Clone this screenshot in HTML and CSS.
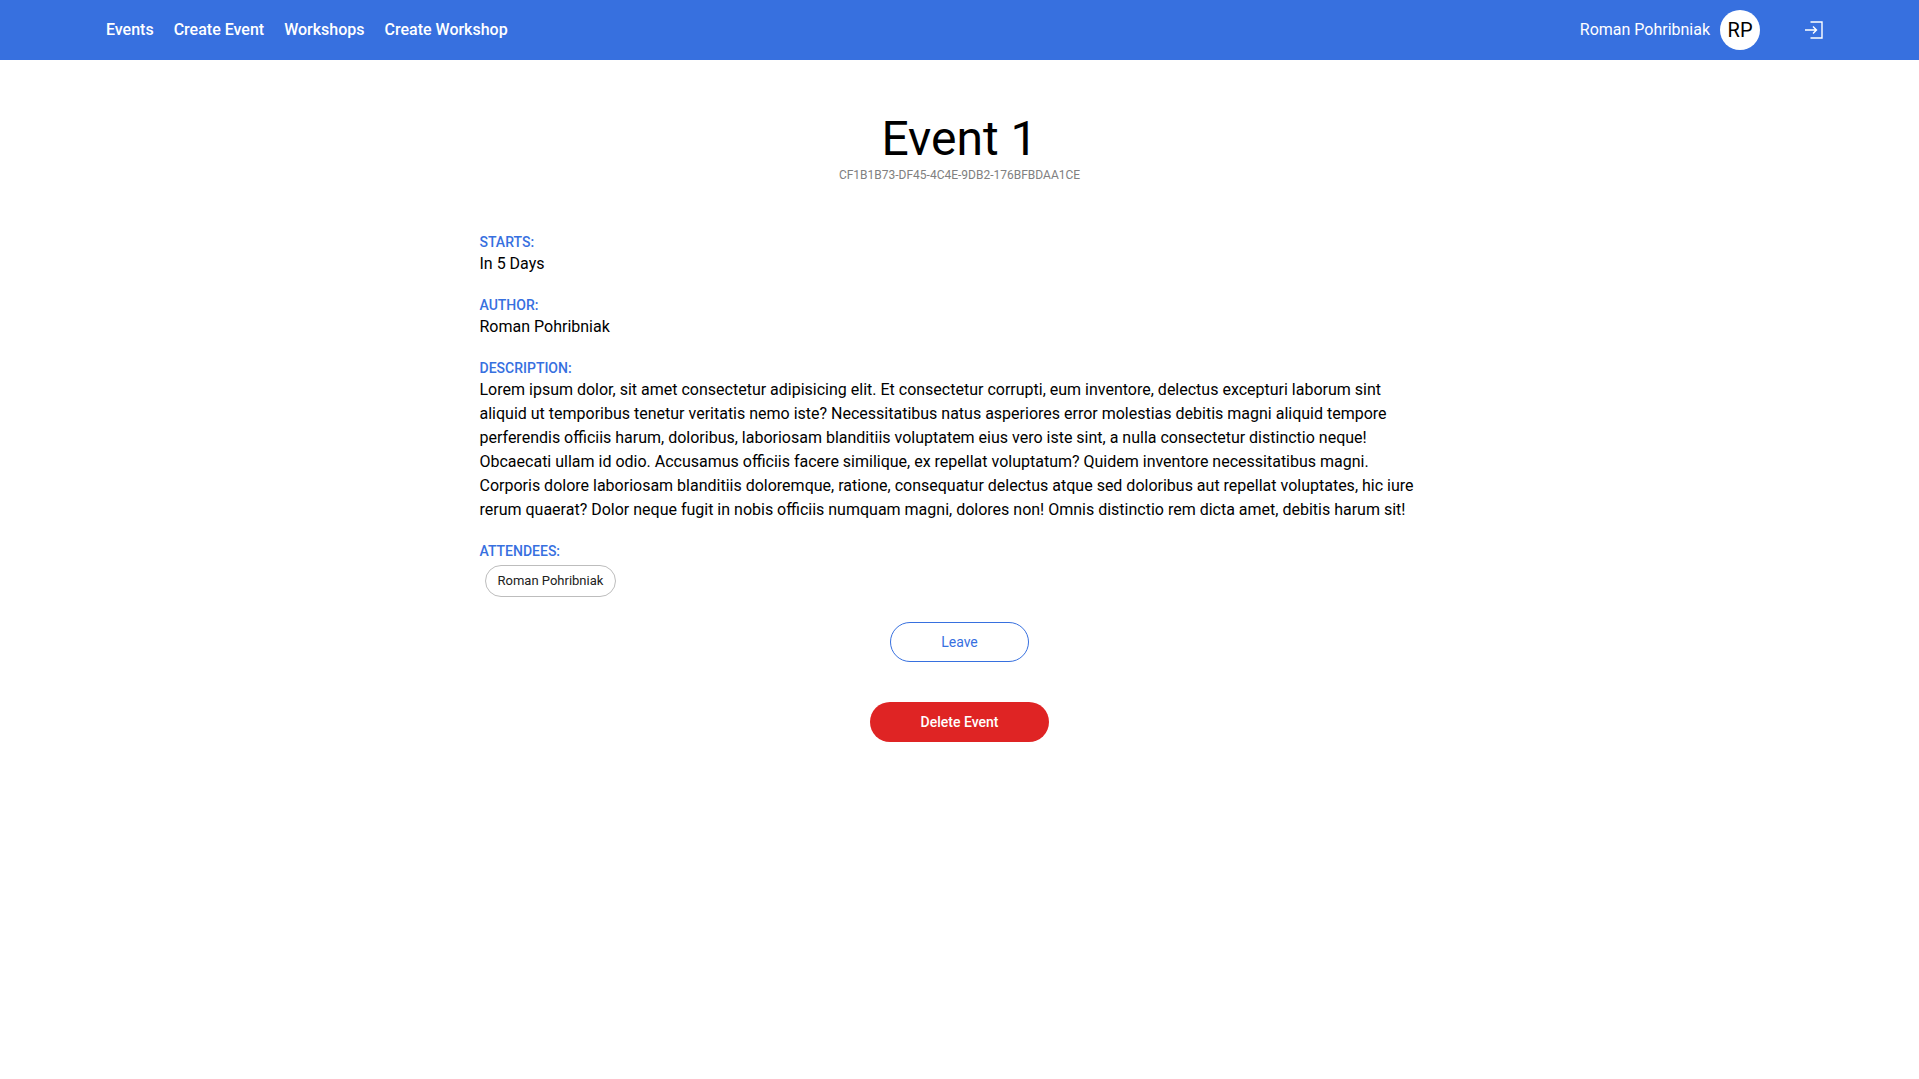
FILE: index.html
```html
<!DOCTYPE html>
<html lang="en">
<head>
  <meta charset="utf-8">
  <meta name="viewport" content="width=device-width, initial-scale=1">
  <title>Event 1</title>
  <link rel="stylesheet" href="styles.css">
</head>
<body>
  <header class="header">
    <nav class="nav">
      <a class="nav-link" href="#">Events</a>
      <a class="nav-link" href="#">Create Event</a>
      <a class="nav-link" href="#">Workshops</a>
      <a class="nav-link" href="#">Create Workshop</a>
    </nav>
    <div class="account">
      <a class="user" href="#">
        <span class="user-name">Roman Pohribniak</span>
        <span class="avatar">RP</span>
      </a>
      <button class="logout" type="button" aria-label="Log out">
        <svg width="18" height="18" viewBox="0 0 18 18" fill="none" stroke="currentColor" aria-hidden="true">
          <path d="M5.5 1H17v16H5.5" stroke-width="1.4"/>
          <path d="M0 9h11.5M8 5.5 11.5 9 8 12.5" stroke-width="1.4"/>
        </svg>
      </button>
    </div>
  </header>
  <main class="event">
    <div class="heading">
      <h1 class="title">Event 1</h1>
      <p class="event-id">CF1B1B73-DF45-4C4E-9DB2-176BFBDAA1CE</p>
    </div>
    <section class="field">
      <h2 class="label">Starts:</h2>
      <p class="value">In 5 Days</p>
    </section>
    <section class="field">
      <h2 class="label">Author:</h2>
      <p class="value">Roman Pohribniak</p>
    </section>
    <section class="field">
      <h2 class="label">Description:</h2>
      <p class="value">
        Lorem ipsum dolor, sit amet consectetur adipisicing elit. Et consectetur corrupti, eum inventore, delectus excepturi laborum sint <br>
        aliquid ut temporibus tenetur veritatis nemo iste? Necessitatibus natus asperiores error molestias debitis magni aliquid tempore <br>
        perferendis officiis harum, doloribus, laboriosam blanditiis voluptatem eius vero iste sint, a nulla consectetur distinctio neque! <br>
        Obcaecati ullam id odio. Accusamus officiis facere similique, ex repellat voluptatum? Quidem inventore necessitatibus magni. <br>
        Corporis dolore laboriosam blanditiis doloremque, ratione, consequatur delectus atque sed doloribus aut repellat voluptates, hic iure <br>
        rerum quaerat? Dolor neque fugit in nobis officiis numquam magni, dolores non! Omnis distinctio rem dicta amet, debitis harum sit!
      </p>
    </section>
    <section class="field">
      <h2 class="label">Attendees:</h2>
      <ul class="attendees">
        <li class="chip">Roman Pohribniak</li>
      </ul>
    </section>
    <div class="actions">
      <button class="button button-outlined" type="button">Leave</button>
      <button class="button button-danger" type="button">Delete Event</button>
    </div>
  </main>
</body>
</html>
```

FILE: styles.css
```css
* {
  box-sizing: border-box;
}

body {
  margin: 0;
  background: #fff;
  color: #000;
  font-family: Roboto, "Liberation Sans", sans-serif;
  font-size: 16px;
  line-height: 24px;
}

h1, h2, p, ul {
  margin: 0;
  padding: 0;
}

.header {
  display: flex;
  align-items: center;
  justify-content: space-between;
  min-height: 60px;
  padding: 0 5%;
  background: #3770df;
  color: #fff;
}

.nav {
  display: flex;
}

.nav-link {
  padding: 0 10px;
  color: inherit;
  font-weight: 500;
  text-decoration: none;
}

.account {
  display: flex;
  align-items: center;
  gap: 45px;
}

.user {
  display: flex;
  align-items: center;
  gap: 10px;
  color: inherit;
  text-decoration: none;
}

.avatar {
  display: grid;
  place-items: center;
  width: 40px;
  height: 40px;
  border-radius: 50%;
  background: #fff;
  color: #000;
  font-size: 20px;
}

.logout {
  display: flex;
  padding: 0;
  border: 0;
  background: none;
  color: #fff;
  cursor: pointer;
}

.event {
  display: flex;
  flex-direction: column;
  gap: 20px;
  max-width: 960px;
  margin: 0 auto;
  padding: 51px 0;
}

.heading {
  padding-bottom: 30px;
  text-align: center;
}

.title {
  font-size: 48px;
  font-weight: 400;
  line-height: 56px;
}

.event-id {
  color: #808080;
  font-size: 12px;
  line-height: 16px;
}

.label {
  color: #3770df;
  font-size: 14px;
  font-weight: 500;
  line-height: 19px;
  text-transform: uppercase;
}

.attendees {
  display: flex;
  flex-wrap: wrap;
  gap: 10px;
  padding: 4px 5px;
  list-style: none;
}

.chip {
  padding: 3px 12px;
  border: 1px solid #bdbdbd;
  border-radius: 16px;
  color: #212121;
  font-size: 13px;
}

.actions {
  display: flex;
  flex-direction: column;
  align-items: center;
  gap: 40px;
  padding-top: 1px;
}

.button {
  min-height: 40px;
  padding: 0 50px;
  border: 1px solid transparent;
  border-radius: 20px;
  font-family: inherit;
  font-size: 14px;
  font-weight: 500;
  cursor: pointer;
}

.button-outlined {
  border-color: #3770df;
  background: #fff;
  color: #3770df;
  font-weight: 400;
}

.button-danger {
  background: #df2424;
  color: #fff;
}

/* Let the description wrap freely once the column gets narrow */
@media (max-width: 980px) {
  .event {
    padding-right: 20px;
    padding-left: 20px;
  }

  .value br {
    display: none;
  }
}
```
